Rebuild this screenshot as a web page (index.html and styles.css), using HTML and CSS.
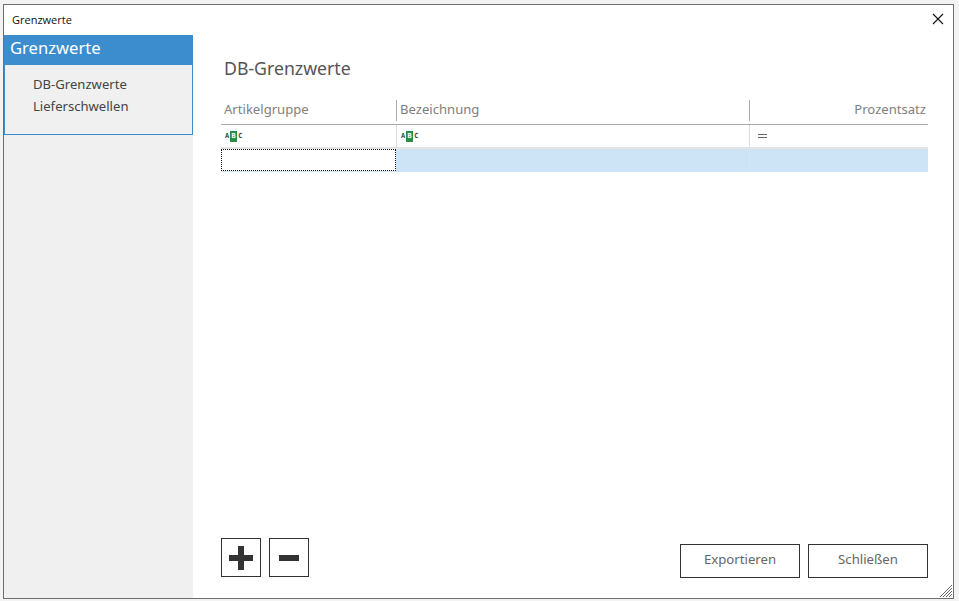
FILE: index.html
```html
<!DOCTYPE html>
<html lang="de">
<head>
    <meta charset="UTF-8">
    <title>Grenzwerte</title>
    <link rel="stylesheet" href="styles.css">
</head>
<body>
    <div class="window">
        <div class="titlebar">
            <span class="title">Grenzwerte</span>
            <svg class="close" width="12" height="12" viewBox="0 0 12 12"><path d="M1 1L11 11M11 1L1 11" stroke="#111" stroke-width="1.1" fill="none"/></svg>
        </div>
        <div class="content">
            <div class="sidebar">
                <div class="nav-panel">
                    <div class="nav-head">Grenzwerte</div>
                    <div class="nav-list">
                        <div class="nav-item">DB-Grenzwerte</div>
                        <div class="nav-item">Lieferschwellen</div>
                    </div>
                </div>
            </div>
            <div class="main">
                <h1>DB-Grenzwerte</h1>
                <div class="grid">
                    <div class="row head-row">
                        <div class="cell col-a">Artikelgruppe</div>
                        <div class="cell col-b">Bezeichnung</div>
                        <div class="cell col-c right">Prozentsatz</div>
                    </div>
                    <div class="row filter-row">
                        <div class="cell col-a">
                            <span class="abc"><i>A</i><b>B</b><i>C</i></span>
                        </div>
                        <div class="cell col-b">
                            <span class="abc"><i>A</i><b>B</b><i>C</i></span>
                        </div>
                        <div class="cell col-c"><span class="equals"></span></div>
                    </div>
                    <div class="row new-row">
                        <div class="cell col-a focus-cell"></div>
                        <div class="cell col-b"></div>
                        <div class="cell col-c"></div>
                    </div>
                </div>
                <div class="footer">
                    <button class="icon-btn" aria-label="Hinzufügen">
                        <svg width="26" height="26" viewBox="0 0 26 26"><path d="M10 1h6v9h9v6h-9v9h-6v-9H1v-6h9z" fill="#333"/></svg>
                    </button>
                    <button class="icon-btn" aria-label="Entfernen">
                        <svg width="26" height="26" viewBox="0 0 26 26"><rect x="3" y="10" width="20" height="6" fill="#333"/></svg>
                    </button>
                    <div class="spacer"></div>
                    <button class="text-btn">Exportieren</button>
                    <button class="text-btn">Schließen</button>
                </div>
            </div>
        </div>
        <svg class="grip" width="14" height="14" viewBox="0 0 14 14"><path d="M13 1L1 13M13 4L4 13M13 7L7 13M13 10L10 13" stroke="#666" stroke-width="1" fill="none"/></svg>
    </div>
</body>
</html>
```

FILE: styles.css
```css
html, body {
    margin: 0;
    height: 100%;
}
body {
    background-color: #f3f3f3;
    font-family: 'Noto Sans', sans-serif;
    padding: 4px 5px 2px 3px;
    box-sizing: border-box;
    height: 601px;
    overflow: hidden;
}
.window {
    position: relative;
    height: 100%;
    box-sizing: border-box;
    background: white;
    border: 1px solid #6f6f6f;
    display: flex;
    flex-direction: column;
}
.titlebar {
    height: 30px;
    flex: none;
    display: flex;
    align-items: center;
    justify-content: space-between;
    padding: 0 9px 0 8px;
}
.title {
    font-family: 'Open Sans', sans-serif;
    font-size: 11px;
    color: #111;
    margin-top: -2px;
}
.close {
    margin-top: -2px;
}
.content {
    flex: 1;
    display: flex;
    min-height: 0;
}
.sidebar {
    width: 189px;
    flex: none;
    background-color: #f0f0f0;
}
.nav-panel {
    height: 100px;
    box-sizing: border-box;
    border: 1px solid #3c8dce;
    border-top: none;
}
.nav-head {
    height: 30px;
    margin: 0 -1px;
    padding-left: 6px;
    background-color: #3c8dce;
    color: white;
    font-size: 16.6px;
    line-height: 25px;
}
.nav-list {
    padding: 8px 0 0 28px;
}
.nav-item {
    font-size: 13.1px;
    line-height: 22px;
    color: #444;
}
.main {
    flex: 1;
    display: flex;
    flex-direction: column;
    padding: 0 25px 20px 28px;
    min-width: 0;
}
h1 {
    margin: 20px 0 19px 3px;
    font-size: 17.7px;
    line-height: 26px;
    font-weight: 400;
    color: #555;
}
.row {
    display: flex;
}
.cell {
    box-sizing: border-box;
}
.col-a {
    width: 175px;
}
.col-b {
    width: 353px;
    border-left: 1px solid #ddd;
}
.col-c {
    flex: 1;
    border-left: 1px solid #ddd;
}
.head-row {
    height: 25px;
    border-bottom: 1px solid #a9a9a9;
    box-sizing: border-box;
}
.head-row .cell {
    font-size: 13.1px;
    line-height: 18px;
    color: #7f7f7f;
    padding: 0 3px;
    height: 21px;
}
.head-row .col-b, .head-row .col-c {
    border-left-color: #aaa;
}
.head-row .right {
    padding-right: 2px;
}
.right {
    text-align: right;
}
.filter-row {
    height: 24px;
    box-sizing: border-box;
    border-bottom: 2px solid #e3e3e3;
}
.filter-row .cell {
    display: flex;
    align-items: center;
    padding-left: 4px;
}
.filter-row .col-c {
    padding-left: 8px;
}
.abc {
    display: flex;
    align-items: center;
    font-family: 'DejaVu Sans Mono', monospace;
    font-size: 7px;
    font-weight: 700;
    line-height: 10px;
}
.abc i {
    font-style: normal;
    color: #444;
}
.abc b {
    background-color: #2e8b47;
    color: white;
    width: 7px;
    height: 11px;
    line-height: 11px;
    margin: 0 1px;
    text-align: center;
}
.equals {
    width: 9px;
    height: 2px;
    border-top: 1px solid #666;
    border-bottom: 1px solid #666;
}
.new-row {
    height: 23px;
    background-color: #cde4f7;
}
.focus-cell {
    background: white;
    border: 1px dotted #111;
    height: 22px;
}
.new-row .col-c {
    border-left-color: #d6e6f3;
}
.new-row .col-b {
    border-left: none;
}
.footer {
    margin-top: auto;
    display: flex;
    align-items: flex-end;
    gap: 8px;
}
.spacer {
    flex: 1;
}
button {
    background: white;
    border: 1px solid #333;
    padding: 0;
    font-family: inherit;
    cursor: pointer;
}
.icon-btn {
    width: 40px;
    height: 39px;
    display: flex;
    align-items: center;
    justify-content: center;
    margin-bottom: 1px;
}
.text-btn {
    width: 120px;
    height: 34px;
    font-size: 13.2px;
    color: #666;
    padding-bottom: 5px;
}
.grip {
    position: absolute;
    right: 0;
    bottom: 0;
}
```
